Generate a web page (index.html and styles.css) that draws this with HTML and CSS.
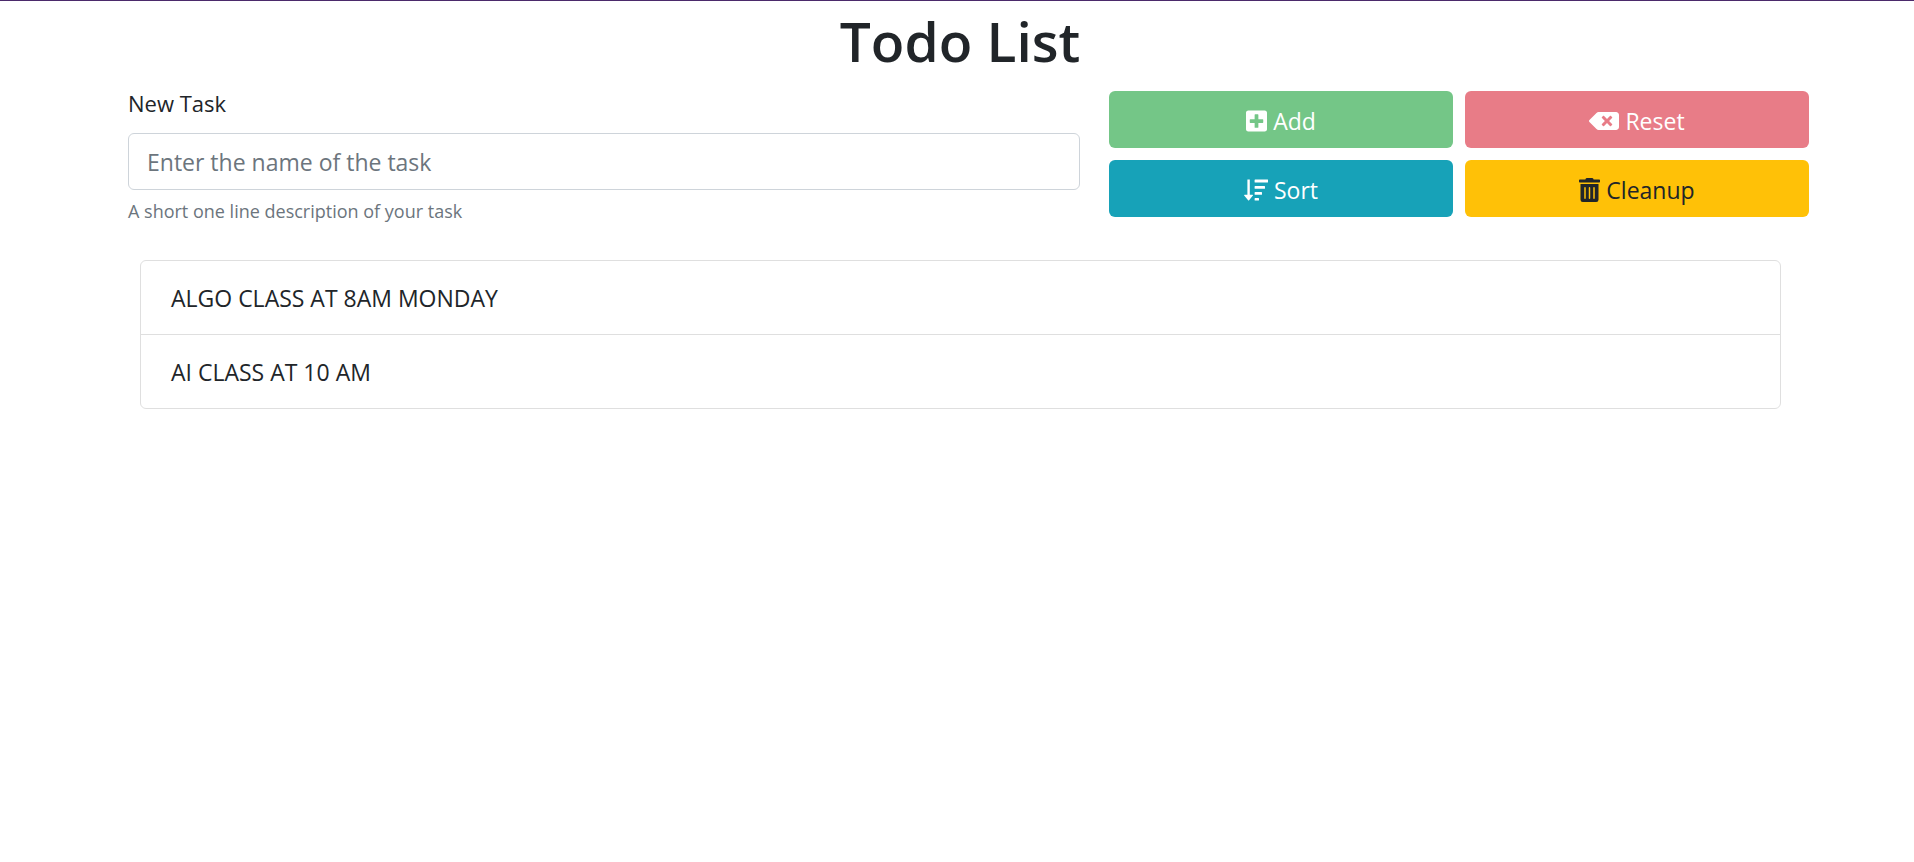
FILE: index.html
```html
<!DOCTYPE html>
<html lang="en">
<head>
<meta charset="utf-8">
<meta name="viewport" content="width=device-width, initial-scale=1">
<title>Todo List</title>
<link rel="stylesheet" href="styles.css">
</head>
<body>
<header class="header"><h1 class="title">Todo List</h1></header>
<main class="container">
  <form class="task-form">
    <div class="field">
      <label class="field-label" for="task">New Task</label>
      <input class="field-input" id="task" type="text" placeholder="Enter the name of the task" aria-describedby="task-help">
      <small class="field-help" id="task-help">A short one line description of your task</small>
    </div>
    <div class="actions">
      <button class="btn btn-add" type="button" disabled>
        <svg class="icon" viewBox="0 0 448 512" width="21" height="24" aria-hidden="true"><path d="M400 32H48C21.500 32 0 53.500 0 80v352c0 26.500 21.500 48 48 48h352c26.500 0 48-21.500 48-48V80c0-26.500-21.500-48-48-48zm-32 252c0 6.600-5.400 12-12 12h-92v92c0 6.600-5.400 12-12 12h-56c-6.600 0-12-5.400-12-12v-92H92c-6.600 0-12-5.400-12-12v-56c0-6.600 5.400-12 12-12h92v-92c0-6.600 5.400-12 12-12h56c6.600 0 12 5.400 12 12v92h92c6.600 0 12 5.400 12 12v56z"/></svg>
        <span>Add</span>
      </button>
      <button class="btn btn-reset" type="button" disabled>
        <svg class="icon" viewBox="0 0 640 512" width="30" height="24" aria-hidden="true"><path d="M576 64H205.260A63.970 63.970 0 0 0 160 82.750L9.370 233.370c-12.500 12.500-12.500 32.760 0 45.250L160 429.250c12 12 28.280 18.750 45.250 18.750H576c35.350 0 64-28.650 64-64V128c0-35.350-28.650-64-64-64zm-84.690 254.060c6.250 6.250 6.250 16.380 0 22.630l-22.620 22.620c-6.250 6.250-16.380 6.250-22.630 0L384 301.250l-62.060 62.060c-6.250 6.250-16.380 6.250-22.630 0l-22.620-22.620c-6.250-6.250-6.250-16.380 0-22.630L338.750 256l-62.060-62.060c-6.250-6.250-6.250-16.380 0-22.630l22.620-22.620c6.250-6.250 16.380-6.250 22.630 0L384 210.750l62.060-62.060c6.250-6.250 16.380-6.250 22.630 0l22.620 22.620c6.250 6.250 6.250 16.380 0 22.630L429.250 256l62.060 62.060z"/></svg>
        <span>Reset</span>
      </button>
      <button class="btn btn-sort" type="button">
        <svg class="icon" viewBox="0 0 24 24" width="24" height="24" aria-hidden="true"><path d="M3.400 1.500h2.400v15.200h2.700c.5 0 .7.500.4.900l-3.800 4.700a.7.700 0 0 1-1 0L.2 17.600c-.3-.4-.1-.9.400-.9h2.800zM11.200 1.500h12.300c.5 0 .5.300.5.500v2c0 .4-.2.600-.5.600H11.200c-.4 0-.6-.2-.6-.6V2.100c0-.4.2-.6.600-.6zM11.200 8h9.200c.4 0 .6.200.6.600v1.600c0 .4-.2.600-.6.600h-9.200c-.4 0-.6-.2-.6-.6V8.600c0-.4.2-.6.600-.6zM11.200 14h6.200c.4 0 .6.200.6.600v1.600c0 .4-.2.600-.6.600h-6.200c-.4 0-.6-.2-.6-.6v-1.600c0-.4.2-.6.600-.6zM11.200 20h3.200c.4 0 .6.200.6.600v1.300c0 .4-.2.600-.6.600h-3.200c-.4 0-.6-.2-.6-.6v-1.300c0-.4.2-.6.600-.6z"/></svg>
        <span>Sort</span>
      </button>
      <button class="btn btn-cleanup" type="button">
        <svg class="icon" viewBox="0 0 448 512" width="21" height="24" aria-hidden="true"><path fill-rule="evenodd" d="M432 32H312l-9.400-18.700A24 24 0 0 0 281.100 0H166.800a23.720 23.720 0 0 0-21.400 13.300L136 32H16A16 16 0 0 0 0 48v32a16 16 0 0 0 16 16h416a16 16 0 0 0 16-16V48a16 16 0 0 0-16-16zM32 128v336a48 48 0 0 0 48 48h288a48 48 0 0 0 48-48V128zm96 64c9 0 16 7 16 16v224c0 9-7 16-16 16s-16-7-16-16V208c0-9 7-16 16-16zm96 0c9 0 16 7 16 16v224c0 9-7 16-16 16s-16-7-16-16V208c0-9 7-16 16-16zm96 0c9 0 16 7 16 16v224c0 9-7 16-16 16s-16-7-16-16V208c0-9 7-16 16-16z"/></svg>
        <span>Cleanup</span>
      </button>
    </div>
  </form>
  <ul class="list">
    <li class="list-item">ALGO CLASS AT 8AM MONDAY</li>
    <li class="list-item">AI CLASS AT 10 AM</li>
  </ul>
</main>
</body>
</html>
```
FILE: styles.css
```css
* { box-sizing: border-box; }

body {
  margin: 0;
  border-top: 1px solid #4b2a6b;
  background: #fff;
  color: #212529;
  font-family: "Segoe UI", "Open Sans", "Noto Sans", sans-serif;
  font-size: 23px;
  line-height: 36px;
}

.header { padding: 4px 0 14px 6px; }

.title {
  margin: 0;
  text-align: center;
  font-size: 55px;
  font-weight: 600;
  line-height: 72px;
}

.container { padding: 0 105px 0 128px; }

.task-form {
  display: grid;
  grid-template-columns: minmax(0, 952fr) minmax(0, 700fr);
  gap: 29px;
  align-items: start;
}

.field {
  display: flex;
  flex-direction: column;
}

.field-label {
  margin-top: -6px;
  margin-bottom: 12px;
  font-size: 22px;
}

.field-input {
  width: 100%;
  height: 57px;
  padding: 8px 18px;
  border: 1px solid #ced4da;
  border-radius: 6px;
  background: #fff;
  color: #495057;
  font: inherit;
}

.field-input::placeholder {
  color: #6c757d;
  opacity: 1;
}

.field-help {
  margin-top: 6px;
  color: #6c757d;
  font-size: 18px;
  line-height: 30px;
}

.actions {
  display: grid;
  grid-template-columns: 1fr 1fr;
  gap: 12px;
}

.btn {
  display: flex;
  align-items: center;
  justify-content: center;
  gap: 6px;
  height: 57px;
  padding: 2px 18px 0;
  border: 0;
  border-radius: 6px;
  color: #fff;
  font: inherit;
}

.icon { fill: currentColor; }

.btn-add { background: #74c687; }
.btn-reset { background: #e87c87; }
.btn-sort { background: #17a2b8; }
.btn-cleanup { background: #ffc107; color: #212529; }

.list {
  margin: 34px 28px 0 12px;
  padding: 0;
  border: 1px solid #dfdfdf;
  border-radius: 6px;
  list-style: none;
}

.list-item {
  padding: 19px 30px 18px;
}

.list-item + .list-item { border-top: 1px solid #dfdfdf; }
```
